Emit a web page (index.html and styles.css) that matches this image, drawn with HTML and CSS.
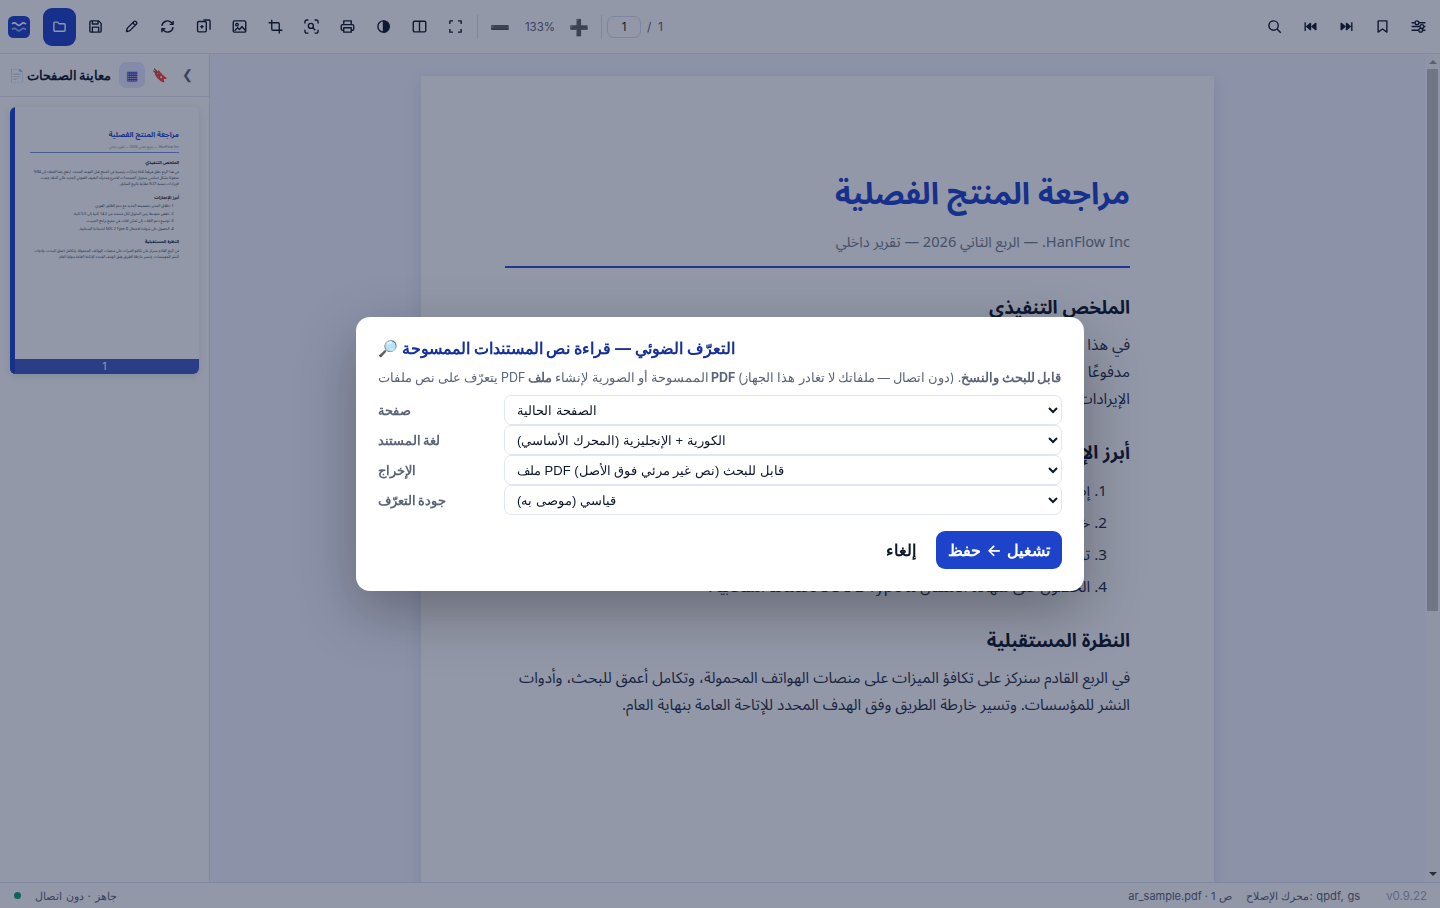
FILE: index.html
```
<!DOCTYPE html>
<html lang="ar">
<head>
    <meta charset="UTF-8" />
    <title>HanFlow PDF</title>
    <link rel="stylesheet" href="styles.css">
</head>
<body>
<div class="app">
    <!-- Toolbar -->
    <header class="toolbar">
        <svg class="logo" viewBox="0 0 22 22"><rect width="22" height="22" rx="5.5" fill="#1d43cb"/><path d="M4 8c1.500-1.500 3-1.500 4.500 0 1.600 1.700 3.200 1.700 4.800 0 1.400-1.400 3-1.400 4.700.2" stroke="#fff" stroke-width="1.700"/><path d="M4 13.500c1.500-1.500 3-1.500 4.500 0 1.600 1.700 3.200 1.700 4.800 0 1.400-1.400 3-1.400 4.700.2" stroke="#9db2f5" stroke-width="1.700"/></svg>
        <button class="tool open"><svg viewBox="0 0 24 24"><path d="M3 6.500A1.500 1.500 0 0 1 4.500 5H9l2.500 2.500h8A1.500 1.500 0 0 1 21 9v9a1.500 1.500 0 0 1-1.500 1.500h-15A1.500 1.500 0 0 1 3 18z"/></svg></button>
        <button class="tool"><svg viewBox="0 0 24 24"><path d="M5 3h12l4 4v12a2 2 0 0 1-2 2H5a2 2 0 0 1-2-2V5a2 2 0 0 1 2-2zM7 3v5h9V3M7 21v-8h10v8"/></svg></button>
        <button class="tool"><svg viewBox="0 0 24 24"><path d="M4 20l1-5L16 4a2.100 2.100 0 0 1 3 0l1 1a2.100 2.100 0 0 1 0 3L9 19zM14 6l4 4"/></svg></button>
        <button class="tool"><svg viewBox="0 0 24 24"><path d="M3 11a9 9 0 0 1 15.500-5L21 8.500M21 3v5.500h-5.500M21 13a9 9 0 0 1-15.500 5L3 15.500M3 21v-5.500h5.500"/></svg></button>
        <button class="tool"><svg viewBox="0 0 24 24"><rect x="2.500" y="4" width="14" height="16.500" rx="2"/><path d="M12 1.500h8.500a2 2 0 0 1 2 2V17M9.500 9.500v5.500M6.700 12.200h5.600"/></svg></button>
        <button class="tool"><svg viewBox="0 0 24 24"><rect x="2" y="3" width="20" height="18" rx="2"/><circle cx="8" cy="9" r="2"/><path d="M4 19l5-5 3 3 4-5 5 6"/></svg></button>
        <button class="tool"><svg viewBox="0 0 24 24"><path d="M6 1v15a2 2 0 0 0 2 2h15M1 6h15a2 2 0 0 1 2 2v15"/></svg></button>
        <button class="tool"><svg viewBox="0 0 24 24"><path d="M1.500 7V4.500a3 3 0 0 1 3-3H7M17 1.500h2.500a3 3 0 0 1 3 3V7M22.500 17v2.500a3 3 0 0 1-3 3H17M7 22.500H4.500a3 3 0 0 1-3-3V17"/><circle cx="11" cy="11" r="4"/><path d="M14 14l4 4"/></svg></button>
        <button class="tool"><svg viewBox="0 0 24 24"><path d="M6 9V3h12v6M6 18H4a2 2 0 0 1-2-2v-5a2 2 0 0 1 2-2h16a2 2 0 0 1 2 2v5a2 2 0 0 1-2 2h-2"/><rect x="6" y="14" width="12" height="7"/></svg></button>
        <button class="tool"><svg viewBox="0 0 24 24"><circle cx="12" cy="12" r="9"/><path d="M12 3a9 9 0 0 1 0 18z" fill="currentColor"/></svg></button>
        <button class="tool"><svg viewBox="0 0 24 24"><rect x="2" y="3.500" width="20" height="17" rx="2"/><path d="M12 3.500v17"/></svg></button>
        <button class="tool"><svg viewBox="0 0 24 24"><path d="M8 3H3v5M16 3h5v5M21 16v5h-5M8 21H3v-5"/></svg></button>
        <span class="sep"></span>
        <button class="emoji">➖</button>
        <span class="zoom">133%</span>
        <button class="emoji">➕</button>
        <span class="sep sep-page"></span>
        <span class="page-input">1</span>
        <span class="page-total">/&nbsp; 1</span>
        <span class="spacer"></span>
        <button class="tool"><svg viewBox="0 0 24 24"><circle cx="10.500" cy="10.500" r="7.500"/><path d="M16 16l6 6"/></svg></button>
        <button class="tool"><svg viewBox="0 0 24 24"><path d="M3.500 5v14"/><path d="M12 7v10l-6-5zM20.500 7v10l-6-5z" fill="currentColor"/></svg></button>
        <button class="tool"><svg viewBox="0 0 24 24"><path d="M20.500 5v14"/><path d="M3.500 7v10l6-5zM12 7v10l6-5z" fill="currentColor"/></svg></button>
        <button class="tool"><svg viewBox="0 0 24 24"><path d="M5 3h14v18l-7-5-7 5z"/></svg></button>
        <button class="tool"><svg viewBox="0 0 24 24"><path d="M1 6h5M13 6h10M1 12h13M21 12h2M1 18h11M19 18h4"/><circle cx="9.500" cy="6" r="3"/><circle cx="17.500" cy="12" r="3"/><circle cx="15.500" cy="18" r="3"/></svg></button>
    </header>

    <div class="main">
        <!-- Sidebar -->
        <aside class="sidebar">
            <div class="side-head">
                <span class="side-title">📄 معاينة الصفحات</span>
                <span class="side-btn active">▦</span>
                <span class="side-btn">🔖</span>
                <span class="side-btn close">❮</span>
            </div>
            <div class="thumb">
                <div class="doc doc-small" id="thumb-doc" dir="rtl"></div>
                <div class="thumb-num">1</div>
            </div>
        </aside>

        <!-- Viewer -->
        <main class="viewer">
            <article class="doc doc-page" id="doc" dir="rtl">
                <h1>مراجعة المنتج الفصلية</h1>
                <p class="doc-sub">HanFlow Inc. — الربع الثاني 2026 — تقرير داخلي</p>
                <h2>الملخص التنفيذي</h2>
                <p>في هذا الربع حقق فريقنا ثلاثة إنجازات رئيسية في المنتج قبل الموعد المحدد. ارتفع رضا العملاء إلى 94%<br>مدفوعًا بشكل أساسي بتحويل المستندات الأسرع ومحرك التعرف الضوئي الجديد عالي الدقة. ونمت<br>الإيرادات بنسبة 27% مقارنة بالربع السابق.</p>
                <h2>أبرز الإنجازات</h2>
                <ul>
                    <li>1. إطلاق المحرر بتصميمه الجديد مع دعم الطابور الفوري.</li>
                    <li>2. خفض متوسط زمن التحويل لكل مستند من 14.2 ثانية إلى 5.5 ثانية.</li>
                    <li>3. توسيع دعم اللغات إلى ثماني لغات في جميع برامج التثبيت.</li>
                    <li>4. الحصول على شهادة الامتثال SOC 2 Type II لخدماتنا السحابية.</li>
                </ul>
                <h2>النظرة المستقبلية</h2>
                <p>في الربع القادم سنركز على تكافؤ الميزات على منصات الهواتف المحمولة، وتكامل أعمق للبحث، وأدوات<br>النشر للمؤسسات. وتسير خارطة الطريق وفق الهدف المحدد للإتاحة العامة بنهاية العام.</p>
            </article>
            <div class="scrollbar"><i class="up"></i><span></span><i class="down"></i></div>
        </main>
    </div>

    <!-- Status bar -->
    <footer class="status">
        <span class="dot"></span>
        <span class="ready">جاهز · دون اتصال</span>
        <span class="spacer"></span>
        <span class="file">ar_sample.pdf · 1 ص</span>
        <span class="engine">محرك الإصلاح: qpdf, gs</span>
        <span class="version">v0.9.22</span>
    </footer>
</div>

<div class="overlay">
    <div class="modal">
        <h3>🔎 التعرّف الضوئي — قراءة نص المستندات الممسوحة</h3>
        <p class="desc">يتعرّف على نص ملفات PDF الممسوحة أو الصورية لإنشاء <b>ملف PDF قابل للبحث والنسخ</b>. (دون اتصال — ملفاتك لا تغادر هذا الجهاز)</p>
        <div class="row">
            <label>صفحة</label>
            <select><option>الصفحة الحالية</option></select>
        </div>
        <div class="row">
            <label>لغة المستند</label>
            <select><option>الكورية + الإنجليزية (المحرك الأساسي)</option></select>
        </div>
        <div class="row">
            <label>الإخراج</label>
            <select><option>ملف PDF قابل للبحث (نص غير مرئي فوق الأصل)</option></select>
        </div>
        <div class="row">
            <label>جودة التعرّف</label>
            <select><option>قياسي (موصى به)</option></select>
        </div>
        <div class="actions">
            <button class="btn">إلغاء</button>
            <button class="btn primary">تشغيل ← حفظ</button>
        </div>
    </div>
</div>

<script>
    // The thumbnail shows the same page, smaller
    document.getElementById('thumb-doc').innerHTML = document.getElementById('doc').innerHTML;
</script>
</body>
</html>
```
FILE: styles.css
```
* {
    box-sizing: border-box;
    margin: 0;
    padding: 0;
}

body {
    font-family: Inter, "Noto Sans", sans-serif;
    color: #0f172a;
    overflow: hidden;
}

button {
    border: none;
    background: none;
    font-family: inherit;
}

.app {
    height: 908px;
    display: flex;
    flex-direction: column;
    background: #fff;
}

/* Toolbar */
.toolbar {
    height: 54px;
    flex: none;
    display: flex;
    align-items: center;
    padding: 0 2px 0 8px;
    border-bottom: 1px solid #e2e6f4;
}

.toolbar svg {
    fill: none;
    stroke: currentColor;
    stroke-width: 2.2;
    stroke-linejoin: round;
    width: 15px;
    height: 15px;
    display: block;
}

.toolbar .logo {
    width: 22px;
    height: 22px;
    stroke: none;
    margin-right: 13px;
}

.tool {
    width: 33px;
    height: 38px;
    margin-right: 3px;
    display: flex;
    align-items: center;
    justify-content: center;
    color: #0f172a;
    border-radius: 9px;
}

.tool.open {
    background: #1d43cb;
    color: #fff;
}

.sep {
    width: 1px;
    height: 24px;
    background: #d9def0;
    margin-left: 2px;
}

.emoji {
    width: 34px;
    font-size: 16px;
    margin-left: 5px;
    text-align: center;
}

.zoom {
    width: 46px;
    text-align: center;
    font-size: 11.5px;
    color: #5b6478;
}

.zoom + .emoji {
    margin-left: -1px;
}

.sep-page {
    margin-left: 5px;
}

.page-input {
    width: 34px;
    height: 22px;
    margin-left: 5px;
    border: 1px solid #d5dcf2;
    border-radius: 7px;
    text-align: center;
    font-size: 11.5px;
    line-height: 21px;
}

.page-total {
    margin-left: 6px;
    font-size: 12px;
    color: #5b6478;
}

.spacer {
    flex: 1;
}

/* Sidebar */
.main {
    flex: 1;
    min-height: 0;
    display: flex;
}

.sidebar {
    width: 210px;
    border-right: 1px solid #dfe3f3;
}

.side-head {
    height: 43px;
    padding: 0 9px;
    display: flex;
    align-items: center;
    border-bottom: 1px solid #e2e6f4;
    font-size: 13px;
}

.side-title {
    flex: none;
    font-size: 12.5px;
    font-weight: 700;
    word-spacing: -1px;
    width: 110px;
    white-space: nowrap;
}

.side-btn {
    flex: none;
    width: 26px;
    height: 26px;
    margin-right: 2px;
    border-radius: 7px;
    display: flex;
    align-items: center;
    justify-content: center;
    color: #5b6478;
}

.side-btn.active {
    background: #e4e8ff;
    color: #1d43cb;
}

.side-btn.close {
    margin-left: -1px;
    padding-bottom: 3px;
}

.thumb {
    width: 189px;
    height: 267px;
    margin: 10px 0 0 10px;
    border-radius: 6px;
    overflow: hidden;
    background: linear-gradient(to right, #1d43cb 5px, #fff 5px);
    box-shadow: 0 2px 8px rgba(15,27,61,0.12);
    display: flex;
    flex-direction: column;
}

.thumb-num {
    height: 15px;
    flex: none;
    border-left: 5px solid #1d43cb;
    background: #3f5bc2;
    color: #fff;
    font-size: 10.5px;
    line-height: 15px;
    text-align: center;
    padding-right: 5px;
}

/* Viewer */
.viewer {
    flex: 1;
    display: flex;
    background: #f2f4ff;
    padding: 22px 0 0 211px;
    overflow: hidden;
}

/* Document page, sized in em so it can be drawn at any scale */
.doc {
    font-family: "Noto Sans Arabic", "Noto Sans", sans-serif;
    color: #0f172a;
    width: 79.3em;
    height: 112.2em;
    padding: 8.4em 8.4em 0;
    white-space: nowrap;
    flex: none;
}

.doc-page {
    font-size: 10px;
    background: #fff;
    box-shadow: 0 4px 16px rgba(15,27,61,0.1);
}

.doc-small {
    font-size: 2.383px;
    height: 252px;
    overflow: hidden;
}

.doc h1 {
    font-size: 3.05em;
    line-height: 2.3;
    color: #1d43cb;
}

.doc p {
    font-size: 1.53em;
    line-height: 1.78;
    color: #263044;
}

.doc .doc-sub {
    font-size: 1.46em;
    line-height: 1.76;
    padding-bottom: 0.7em;
    color: #717d90;
    border-bottom: 0.14em solid #2f52cf;
}

.doc-small .doc-sub {
    border-bottom: 1px solid #7c93e2;
}

.doc h2 {
    font-size: 1.86em;
    line-height: 1.8;
    margin: 1.28em 0 0.36em;
}

.doc ul {
    list-style: none;
    padding-right: 2.3em;
}

.doc li {
    font-size: 1.53em;
    line-height: 1.78;
    margin-bottom: 0.313em;
    color: #263044;
}

.scrollbar {
    width: 15px;
    margin: -22px 0 0 auto;
    background: #fafafa;
    display: flex;
    flex-direction: column;
    align-items: center;
    justify-content: space-between;
    padding: 6px 0 6px;
}

.scrollbar span {
    width: 11px;
    height: 542px;
    background: #c1c1c1;
    margin: 5px 0 auto;
}

.scrollbar i {
    border: 4px solid transparent;
}

.scrollbar .up {
    border-top: none;
    border-bottom-color: #9a9a9a;
}

.scrollbar .down {
    border-bottom: none;
    border-top-color: #404040;
}

/* Status bar */
.status {
    height: 26px;
    flex: none;
    border-top: 1px solid #d9def2;
    padding: 0 13px 0 14px;
    display: flex;
    align-items: center;
    font-size: 11.2px;
    color: #5b6478;
}

.dot {
    width: 7px;
    height: 7px;
    border-radius: 50%;
    background: #10a070;
    margin-right: 14px;
}

.ready {
    font-size: 11.4px;
    word-spacing: 0.6px;
}

.file {
    font-size: 11px;
}

.engine {
    margin: 0 26px 0 14px;
    word-spacing: 0.6px;
}

.version {
    font-size: 11.5px;
    color: #a3aabb;
}

/* OCR dialog */
.overlay {
    position: fixed;
    inset: 0;
    background: rgba(15,27,61,0.45);
    display: flex;
    align-items: center;
    justify-content: center;
}

.modal {
    width: 728px;
    height: 274px;
    padding: 19px 22px 22px;
    background: #fff;
    border-radius: 14px;
    box-shadow: 0 20px 60px rgba(0,0,0,0.3);
}

.modal h3 {
    font-size: 16px;
    line-height: 24px;
    color: #16309a;
    white-space: nowrap;
}

.desc {
    font-size: 12.5px;
    line-height: 20px;
    word-spacing: -0.5px;
    margin: 8px 0 7px;
    color: #5b6478;
    white-space: nowrap;
}

.row {
    display: flex;
    align-items: center;
    height: 30px;
}

.row label {
    width: 126px;
    font-size: 12.5px;
    font-weight: 600;
    word-spacing: -0.8px;
    color: #5b6478;
}

.row select {
    flex: 1;
    height: 30px;
    padding: 0 8px;
    border: 1px solid #e2e6f4;
    border-radius: 7px;
    background: #fff;
    color: #0f172a;
    font: 13px "Liberation Sans", sans-serif;
}

.actions {
    display: flex;
    justify-content: flex-end;
    gap: 8px;
    margin-top: 16px;
}

.btn {
    height: 38px;
    padding: 0 12px 1px;
    border-radius: 9px;
    font-size: 16px;
    font-weight: 600;
    word-spacing: 1.3px;
    color: #0f172a;
}

.btn.primary {
    background: #1d43cb;
    color: #fff;
}
```
